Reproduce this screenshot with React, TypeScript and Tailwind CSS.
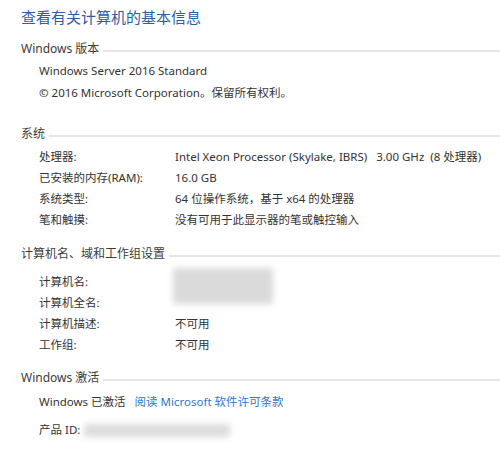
const FONT = "font-['Noto_Sans','Noto_Sans_CJK_SC',sans-serif]";

function SectionHeader({ title }: { title: string }) {
  return (
    <div className="flex items-center gap-1 pl-[21px]">
      <span className="text-[12px] leading-[16px] text-[#3c3c3c] whitespace-nowrap">{title}</span>
      <div className="flex-1 h-[2px] bg-[#e6e6e6] mt-[3px]" />
    </div>
  );
}

function Row({ label, children }: { label: string; children?: React.ReactNode }) {
  return (
    <div className="flex items-center pl-[39px] h-[21px] text-[11.5px] text-[#333]">
      <span className="w-[136px] shrink-0 whitespace-nowrap">{label}</span>
      <span className="whitespace-nowrap">{children}</span>
    </div>
  );
}

export default function App() {
  return (
    <div className={`${FONT} w-[500px] h-[453px] bg-white overflow-hidden`}>
      <h1 className="pl-[21px] pt-[6px] text-[15px] leading-[22px] text-[#2a5fa8]">
        查看有关计算机的基本信息
      </h1>

      <div className="mt-[13px]">
        <SectionHeader title="Windows 版本" />
        <div className="pl-[39px] mt-[6px] text-[11.5px] text-[#333] space-y-[6px]">
          <p className="leading-[16px]">Windows Server 2016 Standard</p>
          <p className="leading-[16px]">© 2016 Microsoft Corporation。保留所有权利。</p>
        </div>
      </div>

      <div className="mt-[25px]">
        <SectionHeader title="系统" />
        <div className="mt-[4px]">
          <Row label="处理器:">Intel Xeon Processor (Skylake, IBRS)&nbsp;&nbsp; 3.00 GHz&nbsp; (8 处理器)</Row>
          <Row label="已安装的内存(RAM):">16.0 GB</Row>
          <Row label="系统类型:">64 位操作系统，基于 x64 的处理器</Row>
          <Row label="笔和触摸:">没有可用于此显示器的笔或触控输入</Row>
        </div>
      </div>

      <div className="mt-[16px]">
        <SectionHeader title="计算机名、域和工作组设置" />
        <div className="relative mt-[9px]">
          <Row label="计算机名:" />
          <Row label="计算机全名:" />
          <Row label="计算机描述:">不可用</Row>
          <Row label="工作组:">不可用</Row>
          <div className="absolute left-[173px] top-[-3px] w-[100px] h-[36px] bg-[#dadada] blur-[3px]" />
        </div>
      </div>

      <div className="mt-[15px]">
        <SectionHeader title="Windows 激活" />
        <div className="mt-[5px] pl-[39px] text-[11.5px] text-[#333]">
          <div className="flex items-center h-[22px] gap-[9px]">
            <span>Windows 已激活</span>
            <span className="text-[#2f79c9]">阅读 Microsoft 软件许可条款</span>
          </div>
          <div className="flex items-center h-[22px] mt-[6px]">
            <span>产品 ID:</span>
            <div className="ml-[4px] w-[146px] h-[13px] bg-[#dcdcdc] blur-[3px]" />
          </div>
        </div>
      </div>
    </div>
  );
}
